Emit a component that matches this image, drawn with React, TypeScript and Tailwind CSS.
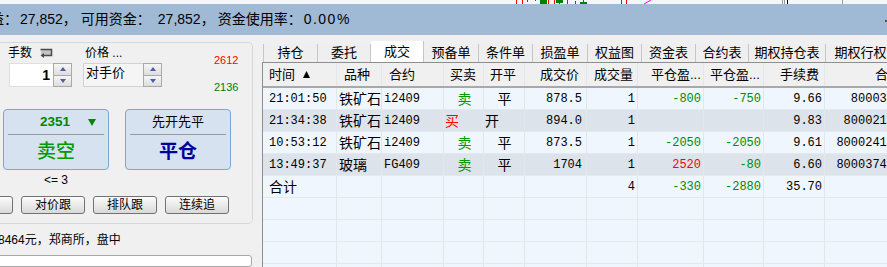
import React from 'react';

const sans = "font-['Liberation_Sans','Noto_Sans_CJK_SC',sans-serif]";
const mono = "font-['Liberation_Mono','Noto_Sans_CJK_SC',monospace] text-[12px]";
const cjk = "font-['Noto_Sans_CJK_SC',sans-serif] text-[14px]";

const W = ['w-[74px]', 'w-[45px]', 'w-[62px]', 'w-[40px]', 'w-[41px]', 'w-[62px]', 'w-[51px]', 'w-[66px]', 'w-[60px]', 'w-[61px]', 'w-[74px]'];

const heads = [
  ['时间', 'pl-[6px]'],
  ['品种', 'pl-[7px]'],
  ['合约', 'pl-[7px]'],
  ['买卖', 'pl-[6px]'],
  ['开平', 'pl-[6px]'],
  ['成交价', 'pl-[15px]'],
  ['成交量', 'pl-[7px]'],
  ['平仓盈...', 'pl-[13px]'],
  ['平仓盈...', 'pl-[6px]'],
  ['手续费', 'pl-[16px]'],
  ['合同号', 'pl-[50px]'],
];

const tabs = [
  ['持仓', 'w-[55px]'],
  ['委托', 'w-[53px]'],
  ['成交', 'w-[53px]'],
  ['预备单', 'w-[55px]'],
  ['条件单', 'w-[54px]'],
  ['损盈单', 'w-[55px]'],
  ['权益图', 'w-[54px]'],
  ['资金表', 'w-[54px]'],
  ['合约表', 'w-[53px]'],
  ['期权持仓表', 'w-[77px]'],
  ['期权行权', 'w-[70px]'],
];

interface Trade {
  time: string;
  name: string;
  code: string;
  side: string;
  oc: string;
  price: string;
  vol: string;
  pl1: string;
  pl2: string;
  fee: string;
  id: string;
}

const trades: Trade[] = [
  { time: '21:01:50', name: '铁矿石', code: 'i2409', side: '卖', oc: '平', price: '878.5', vol: '1', pl1: '-800', pl2: '-750', fee: '9.66', id: '800033' },
  { time: '21:34:38', name: '铁矿石', code: 'i2409', side: '买', oc: '开', price: '894.0', vol: '1', pl1: '', pl2: '', fee: '9.83', id: '8000216' },
  { time: '10:53:12', name: '铁矿石', code: 'i2409', side: '卖', oc: '平', price: '873.5', vol: '1', pl1: '-2050', pl2: '-2050', fee: '9.61', id: '80002415' },
  { time: '13:49:37', name: '玻璃', code: 'FG409', side: '卖', oc: '平', price: '1704', vol: '1', pl1: '2520', pl2: '-80', fee: '6.60', id: '80003748' },
];

const plColor = (v: string) => (v.startsWith('-') ? 'text-[#008c00]' : 'text-[#ff0000]');

function ChartStrip() {
  // leftover candles of the chart above, only the bottom 4px show
  return (
    <svg width="887" height="4" className="block bg-[#f4f6fa]">
      <rect x="516" y="0" width="1" height="4" fill="#ff0000" />
      <rect x="522" y="0" width="1" height="4" fill="#ff0000" />
      <rect x="527" y="0" width="1" height="2" fill="#ff0000" />
      <rect x="535" y="0" width="1" height="1" fill="#008000" />
      <rect x="540" y="0" width="7" height="4" fill="#008000" />
      <rect x="548" y="0" width="1" height="4" fill="#ff0000" />
      <rect x="554" y="0" width="1" height="4" fill="#ff0000" />
      <rect x="556" y="0" width="7" height="3" fill="#008000" />
      <rect x="559" y="3" width="1" height="1" fill="#008000" />
      <rect x="567" y="0" width="1" height="4" fill="#008000" />
      <rect x="575" y="1" width="1" height="3" fill="#ff0000" />
      <rect x="580" y="2" width="7" height="2" fill="#008000" />
      <rect x="583" y="0" width="1" height="2" fill="#008000" />
      <rect x="621" y="0" width="1" height="4" fill="#ff0000" />
      <rect x="626" y="0" width="1" height="4" fill="#ff0000" />
      <path d="M644 4 L651 0" stroke="#ff00ff" strokeWidth="1" />
      <rect x="782" y="0" width="1" height="4" fill="#9a9a9a" />
      <rect x="784" y="0" width="1" height="4" fill="#9a9a9a" />
      <rect x="787" y="0" width="1" height="4" fill="#000000" />
      <rect x="842" y="0" width="1" height="4" fill="#9a9a9a" />
    </svg>
  );
}

function P({ w, children }: { w: string; children: React.ReactNode }) {
  return <span className={`inline-block ${w}`}>{children}</span>;
}

function Spin() {
  return (
    <div className="flex flex-col w-[19px] h-full">
      <div className="flex-1 border border-[#a9a9a9] bg-linear-to-b from-[#f6f6f6] to-[#dedede] flex items-center justify-center">
        <svg width="6" height="4" viewBox="0 0 6 4">
          <polygon points="0,4 3,0 6,4" fill="#4d5ea8" />
        </svg>
      </div>
      <div className="flex-1 border border-t-0 border-[#a9a9a9] bg-linear-to-b from-[#f6f6f6] to-[#dedede] flex items-center justify-center">
        <svg width="6" height="4" viewBox="0 0 6 4">
          <polygon points="0,0 6,0 3,4" fill="#4d5ea8" />
        </svg>
      </div>
    </div>
  );
}

function ReturnIcon() {
  return (
    <svg width="14" height="11" viewBox="0 0 14 11">
      <rect x="2" y="2" width="10" height="5" fill="#c4c4c4" />
      <path d="M1.5 1.5H12.5V7.5H5" fill="none" stroke="#4a4a4a" strokeWidth="1.5" />
      <path d="M1.5 7.5 L5 5 L5 10 Z" fill="#4a4a4a" />
    </svg>
  );
}

function SmallBtn({ label }: { label?: string }) {
  return (
    <div className="w-[64px] h-[18px] shrink-0 border border-[#727272] rounded-[3px] bg-linear-to-b from-[#fbfbfb] to-[#d9d9d9] flex items-center justify-center text-[12px] leading-none">
      {label}
    </div>
  );
}

function LeftPanel() {
  return (
    <div className="w-[253px] shrink-0 flex flex-col pt-[7px]">
      <div className="h-[183px] border border-l-0 border-[#cfd9e2] rounded-r-[5px] pt-[2px] flex flex-col">
        <div className="flex h-[42px]">
          <div className="ml-[8px] w-[75px] flex flex-col">
            <div className="h-[16px] flex items-center gap-[7px] text-[12px]">
              <span>手数</span>
              <ReturnIcon />
            </div>
            <div className="mt-[2px] ml-[1px] w-[63px] h-[24px] flex">
              <div className="flex-1 bg-white border border-r-0 border-[#dedede] flex items-center justify-end pr-[3px] text-[14px] font-bold">1</div>
              <Spin />
            </div>
          </div>
          <div className="w-[79px] flex flex-col">
            <div className="h-[16px] pl-[2px] flex items-center text-[12px]">价格 ...</div>
            <div className="mt-[2px] h-[24px] flex">
              <div className="flex-1 bg-[#f5f5f5] border border-r-0 border-[#d2d2d2] pl-[2px] text-[13px] leading-[17px]">对手价</div>
              <Spin />
            </div>
          </div>
          <div className="ml-[52px] flex flex-col text-[11px] leading-[12px]">
            <span className="mt-[9px] text-[#ff0000]">2612</span>
            <span className="mt-[15px] text-[#008000]">2136</span>
          </div>
        </div>

        <div className="mt-[22px] flex pl-[3px] gap-[16px]">
          <div className="w-[106px] h-[61px] border border-[#7ba6d6] rounded-[4px] bg-[#d6e2f0] flex flex-col">
            <div className="h-[24px] flex items-center pl-[36px] text-[13.5px] font-bold text-[#008800]">
              <span>2351</span>
              <svg width="8" height="7" viewBox="0 0 8 7" className="ml-[18px]">
                <polygon points="0,0 8,0 4,7" fill="#008800" />
              </svg>
            </div>
            <div className="mx-[4px] h-px bg-[#9a9a9a]" />
            <div className="flex-1 flex items-center justify-center text-[19px] font-medium text-[#009900]">卖空</div>
          </div>
          <div className="w-[106px] h-[61px] border border-[#7ba6d6] rounded-[4px] bg-[#d6e2f0] flex flex-col">
            <div className="h-[24px] flex items-center justify-center text-[13px]">先开先平</div>
            <div className="mx-[4px] h-px bg-[#9a9a9a]" />
            <div className="flex-1 flex items-center justify-center text-[19px] font-bold text-[#00009c]">平仓</div>
          </div>
        </div>

        <div className="ml-[3px] w-[106px] h-[20px] flex items-center justify-center text-[12px]">&lt;= 3</div>

        <div className="mt-[6px] -ml-[51px] flex gap-[8px]">
          <SmallBtn />
          <SmallBtn label="对价跟" />
          <SmallBtn label="排队跟" />
          <SmallBtn label="连续追" />
        </div>
      </div>

      <div className="h-[31px] flex items-center text-[12px] whitespace-nowrap -ml-[2px]">8464元，郑商所，盘中</div>
      <div className="h-[12px] w-[256px] -ml-[4px] border border-[#a8a8a8] rounded-[3px] bg-white" />
    </div>
  );
}

function Cell({ i, cls = '', children }: { i: number; cls?: string; children?: React.ReactNode }) {
  return (
    <div className={`${W[i]} shrink-0 h-full flex items-center border-r border-[#e2e7ec] overflow-hidden whitespace-nowrap ${cls}`}>
      {children}
    </div>
  );
}

function RightPanel() {
  return (
    <div className="flex-1 min-w-0 flex flex-col pt-[6px]">
      <div className="h-[21px] flex items-end pl-[1px] text-[13px] whitespace-nowrap">
        {tabs.map(([label, w], i) => (
          <div
            key={label}
            className={`${w} shrink-0 flex items-center justify-center border-r border-[#c6c6c6] ${i === 0 ? 'border-l' : ''} ${
              label === '成交' ? 'h-[21px] bg-white' : 'h-[18px] bg-[#efefef]'
            }`}
          >
            {label}
          </div>
        ))}
      </div>

      <div className="flex-1 border-t border-l border-[#8e8e8e] bg-[#eff6fd] overflow-hidden">
        <div className="h-[25px] flex bg-[#f0f0f0] border-b-2 border-[#a9a9a9] text-[13px]">
          {heads.map(([label, pl], i) => (
            <Cell key={i} i={i} cls={`${pl} border-[#c9c9c9]`}>
              {label}
              {i === 0 && (
                <svg width="7" height="7" viewBox="0 0 7 7" className="ml-[8px]">
                  <polygon points="0,7 3.5,0 7,7" fill="#000" />
                </svg>
              )}
            </Cell>
          ))}
        </div>

        {trades.map((t, r) => (
          <div key={r} className={`h-[22px] flex border-b border-[#e4e9ee] ${r % 2 === 1 ? 'bg-[#dde3ea]' : 'bg-[#eff6fd]'}`}>
            <Cell i={0} cls={`${mono} pl-[6px]`}>{t.time}</Cell>
            <Cell i={1} cls={`${cjk} pl-[2px]`}>{t.name}</Cell>
            <Cell i={2} cls={`${mono} pl-[2px]`}>{t.code}</Cell>
            <Cell
              i={3}
              cls={`${cjk} ${t.side === '买' ? 'pl-[1px] text-[#ff0000]' : 'justify-center pl-[2px] text-[#009900]'}`}
            >
              {t.side}
            </Cell>
            <Cell i={4} cls={`${cjk} ${t.oc === '开' ? 'pl-[1px]' : 'justify-center pl-[1px]'}`}>{t.oc}</Cell>
            <Cell i={5} cls={`${mono} justify-end pr-[4px]`}>{t.price}</Cell>
            <Cell i={6} cls={`${mono} justify-end pr-[2px]`}>{t.vol}</Cell>
            <Cell i={7} cls={`${mono} justify-end pr-[2px] ${plColor(t.pl1)}`}>{t.pl1}</Cell>
            <Cell i={8} cls={`${mono} justify-end pr-[2px] ${plColor(t.pl2)}`}>{t.pl2}</Cell>
            <Cell i={9} cls={`${mono} justify-end pr-[2px]`}>{t.fee}</Cell>
            <Cell i={10} cls={`${mono} justify-end pr-[4px]`}>{t.id}</Cell>
          </div>
        ))}

        <div className="h-[22px] flex border-b border-[#e4e9ee] bg-[#eff6fd]">
          <Cell i={0} cls={`${cjk} pl-[6px]`}>合计</Cell>
          <Cell i={1} />
          <Cell i={2} />
          <Cell i={3} />
          <Cell i={4} />
          <Cell i={5} />
          <Cell i={6} cls={`${mono} justify-end pr-[2px]`}>4</Cell>
          <Cell i={7} cls={`${mono} justify-end pr-[2px] text-[#008c00]`}>-330</Cell>
          <Cell i={8} cls={`${mono} justify-end pr-[2px] text-[#008c00]`}>-2880</Cell>
          <Cell i={9} cls={`${mono} justify-end pr-[2px]`}>35.70</Cell>
          <Cell i={10} />
        </div>

        {[0, 1, 2, 3].map((r) => (
          <div key={r} className="h-[22px] flex border-b border-[#e4e9ee] bg-[#eff6fd]">
            {W.map((_, i) => (
              <Cell key={i} i={i} />
            ))}
          </div>
        ))}
      </div>
    </div>
  );
}

export default function App() {
  return (
    <div className={`w-[887px] h-[267px] overflow-hidden bg-[#f0f0f0] text-black ${sans}`}>
      <ChartStrip />
      <div className="h-[31px] bg-[#a0b9d4] flex items-center text-[14px] whitespace-nowrap relative">
        <span className="-ml-[10px]">
          益<P w="w-[16px]">：</P>27,852<P w="w-[18px]">，</P>可用资金<P w="w-[21px]">：</P>27,852
          <P w="w-[17px]">，</P>资金使用率<P w="w-[16px]">：</P>
          <span className="tracking-[1.5px]">0.00%</span>
        </span>
        <span className="absolute right-0 top-[16px] w-[2px] h-[2px] bg-[#555]" />
      </div>
      <div className="flex h-[232px]">
        <LeftPanel />
        <div className="w-[9px] shrink-0" />
        <RightPanel />
      </div>
    </div>
  );
}
